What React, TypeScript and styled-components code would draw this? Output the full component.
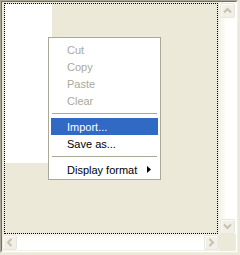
import React from "react";
import styled, { createGlobalStyle } from "styled-components";

const GlobalStyle = createGlobalStyle`
  html, body {
    margin: 0;
    padding: 0;
    background: #ece9d8;
  }
  #root {
    width: 240px;
    height: 255px;
  }
`;

const Frame = styled.div`
  position: relative;
  box-sizing: border-box;
  width: 238px;
  height: 253px;
  border-style: solid;
  border-width: 1px;
  border-color: #aca899 #f1efe2 #f1efe2 #aca899;
  background: #fff;
`;

const Inner = styled.div`
  box-sizing: border-box;
  width: 100%;
  height: 100%;
  border-style: solid;
  border-width: 1px;
  border-color: #716f64 #fff #fff #716f64;
  display: grid;
  grid-template-columns: 217px 17px;
  grid-template-rows: 232px 17px;
`;

const Canvas = styled.div`
  background: #ece9d8;
  padding: 1px 1px 0 2px;
  box-sizing: border-box;
`;

const Focus = styled.div`
  box-sizing: border-box;
  height: 100%;
  border: 1px dotted #000;
  padding: 0;
`;

const WhiteCell = styled.div`
  width: 47px;
  height: 159px;
  background: #fff;
`;

const VBar = styled.div`
  display: flex;
  flex-direction: column;
  justify-content: space-between;
  align-items: center;
  background: linear-gradient(to right, #f3f1ec, #fefefb 40%, #fff);
  padding: 1px 0 0;
`;

const HBar = styled.div`
  display: flex;
  justify-content: space-between;
  align-items: center;
  background: linear-gradient(to bottom, #f3f1ec, #fefefb 40%, #fff);
  border-bottom: 1px solid #f3f1ec;
`;

const Corner = styled.div`
  background: #ece9d8;
`;

const ArrowButton = styled.div`
  box-sizing: border-box;
  width: 15px;
  height: 15px;
  border: 1px solid #e8e6de;
  border-radius: 2px;
  background: #f1efe6;
  display: flex;
  align-items: center;
  justify-content: center;
  box-shadow: inset 1px 1px 0 #fbfaf6;
`;

const Menu = styled.div`
  position: absolute;
  left: 47px;
  top: 36px;
  box-sizing: border-box;
  width: 113px;
  height: 143px;
  background: #fff;
  border: 1px solid #aca899;
  padding: 3px 2px;
  font-family: "Liberation Sans", Arial, sans-serif;
  font-size: 11px;
`;

const Item = styled.div<{ $disabled?: boolean; $active?: boolean }>`
  height: 17px;
  display: flex;
  align-items: center;
  justify-content: space-between;
  padding: 0 7px 0 16px;
  color: ${(p) => (p.$active ? "#fff" : p.$disabled ? "#aca899" : "#000")};
  background: ${(p) => (p.$active ? "#316ac5" : "transparent")};
`;

const Separator = styled.div`
  height: 1px;
  margin: 4px 1px 4px 1px;
  background: #aca899;
`;

const Chevron = ({ dir }: { dir: "up" | "down" | "left" | "right" }) => {
  const rot = { up: 0, right: 90, down: 180, left: 270 }[dir];
  return (
    <svg width="9" height="9" viewBox="0 0 9 9" style={{ transform: `rotate(${rot}deg)` }}>
      <path d="M1 6.5 L4.5 3 L8 6.5" fill="none" stroke="#c5c2b2" strokeWidth="2" />
    </svg>
  );
};

export default function App() {
  return (
    <>
      <GlobalStyle />
      <Frame>
        <Inner>
          <Canvas>
            <Focus>
              <WhiteCell />
            </Focus>
          </Canvas>
          <VBar>
            <ArrowButton>
              <Chevron dir="up" />
            </ArrowButton>
            <ArrowButton>
              <Chevron dir="down" />
            </ArrowButton>
          </VBar>
          <HBar>
            <ArrowButton>
              <Chevron dir="left" />
            </ArrowButton>
            <ArrowButton>
              <Chevron dir="right" />
            </ArrowButton>
          </HBar>
          <Corner />
        </Inner>
        <Menu>
          <Item $disabled>Cut</Item>
          <Item $disabled>Copy</Item>
          <Item $disabled>Paste</Item>
          <Item $disabled>Clear</Item>
          <Separator />
          <Item $active>Import...</Item>
          <Item>Save as...</Item>
          <Separator />
          <Item>
            Display format
            <svg width="4" height="7" viewBox="0 0 4 7">
              <path d="M0 0 L4 3.5 L0 7 Z" fill="#000" />
            </svg>
          </Item>
        </Menu>
      </Frame>
    </>
  );
}
